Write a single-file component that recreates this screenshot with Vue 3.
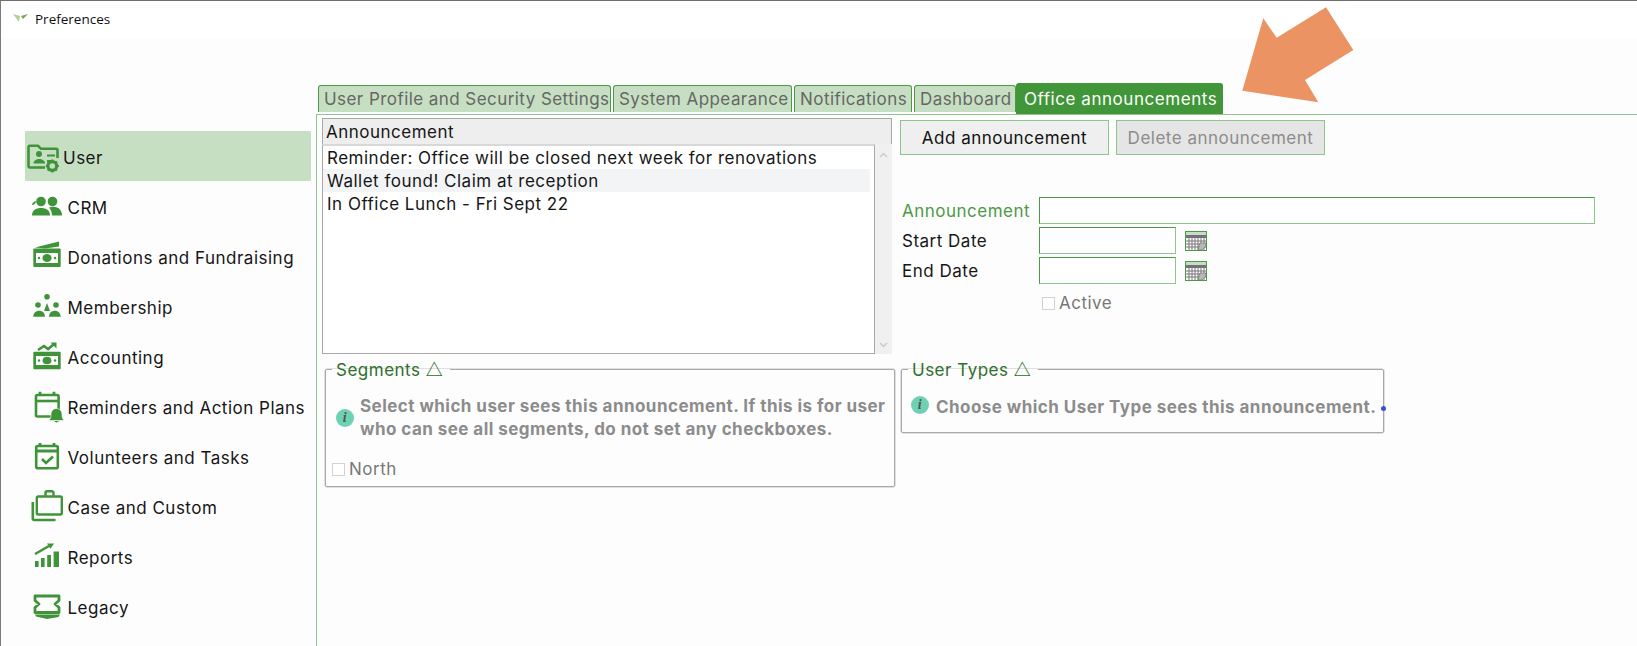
<script setup>
const tabs = [
  { label: 'User Profile and Security Settings', width: 293 },
  { label: 'System Appearance', width: 179 },
  { label: 'Notifications', width: 118 },
  { label: 'Dashboard', width: 102 },
  { label: 'Office announcements', width: 207, active: true },
]
const rows = [
  'Reminder: Office will be closed next week for renovations',
  'Wallet found! Claim at reception',
  'In Office Lunch - Fri Sept 22',
]
</script>

<template>
  <div class="window">
    <header class="titlebar">
      <svg class="logo" width="16" height="12" viewBox="0 0 16 12">
        <path d="M0 1 L7 3 L6 9 Z" fill="#b5cf8f" />
        <path d="M8 3 L15 1 L10 6 Z" fill="#6fa65c" />
      </svg>
      <span>Preferences</span>
    </header>

    <div class="body">
      <nav class="sidebar">
        <div class="nav-item selected user-item">
          <svg class="nav-icon user-icon" width="36" height="40" viewBox="0 0 36 40">
            <path d="M8 31.5 H3 a1.5 1.5 0 0 1-1.5-1.5 V11 a1.2 1.2 0 0 1 1.2-1.2 H11 l3 3 H29 a1.5 1.5 0 0 1 1.5 1.5 V22" fill="none" stroke="#3f9439" stroke-width="2.6" />
            <path d="M8 31.5 H18" stroke="#3f9439" stroke-width="2.6" />
            <circle cx="12" cy="18" r="3" fill="#3f9439" />
            <path d="M6.5 27.5 c0-6 11.5-6 11.5 0 Z" fill="#3f9439" />
            <path d="M20 19.5 H28 M20 25 H25" stroke="#3f9439" stroke-width="2.2" />
            <circle cx="25.3" cy="30" r="4.4" fill="#c6dfc2" stroke="#3f9439" stroke-width="3.2" />
            <path d="M25.3 23.5 V26 M25.3 34 V36.5 M18.8 30 H21.3 M29.3 30 H31.8 M20.7 25.4 L22.4 27.1 M28.2 32.9 L29.9 34.6 M20.7 34.6 L22.4 32.9 M28.2 27.1 L29.9 25.4" stroke="#3f9439" stroke-width="2" />
          </svg>
          <span>User</span>
        </div>

        <div class="nav-item">
          <svg class="nav-icon" width="38" height="40" viewBox="0 0 38 40">
            <circle cx="14" cy="15.5" r="4.8" fill="#3f9439" />
            <circle cx="25.5" cy="15.5" r="4.8" fill="#3f9439" />
            <path d="M5 19 c0-2 2-3.5 4-4 c0 2-1.5 4-4 4 Z" fill="#3f9439" />
            <path d="M5 29.5 c0-1 0-4 3-6 c3-2 9-2 12 0 c3 2 3 5 3 6 Z" fill="#3f9439" />
            <path d="M22 21.5 c4-1.5 9-.5 11 2 c1.6 2 2 4 2 6 H25 c0-3-1-6-3-8 Z" fill="#3f9439" />
          </svg>
          <span>CRM</span>
        </div>

        <div class="nav-item">
          <svg class="nav-icon" width="38" height="40" viewBox="0 0 38 40">
            <path d="M8 11.5 L32 5.5 V10.5 L18 12.5 Z" fill="#3f9439" />
            <rect x="6.3" y="12.5" width="27.4" height="18.4" rx="1" fill="#3f9439" />
            <rect x="9" y="17" width="22" height="10" fill="#fdfdfd" />
            <ellipse cx="20" cy="22" rx="4.6" ry="4" fill="#3f9439" />
            <circle cx="12" cy="22" r="1.2" fill="#3f9439" />
            <circle cx="28" cy="22" r="1.2" fill="#3f9439" />
          </svg>
          <span>Donations and Fundraising</span>
        </div>

        <div class="nav-item">
          <svg class="nav-icon" width="38" height="40" viewBox="0 0 38 40">
            <circle cx="20" cy="10.8" r="2.8" fill="#3f9439" />
            <circle cx="11" cy="19" r="2.8" fill="#3f9439" />
            <circle cx="29" cy="19" r="2.8" fill="#3f9439" />
            <path d="M6.3 30.7 c0-8 11.7-8 11.7 0 Z M22 30.7 c0-8 11.7-8 11.7 0 Z" fill="#3f9439" />
            <path d="M17 25 L20 17 L23 25 Z" fill="#3f9439" />
          </svg>
          <span>Membership</span>
        </div>

        <div class="nav-item">
          <svg class="nav-icon" width="38" height="40" viewBox="0 0 38 40">
            <path d="M11 14 L17 10 L21 13 L26.5 8.5" fill="none" stroke="#3f9439" stroke-width="2.6" />
            <path d="M23.5 6.5 H29.5 V12.5 Z" fill="#3f9439" />
            <rect x="6.3" y="15.7" width="27.4" height="17.6" rx="1" fill="#3f9439" />
            <rect x="9" y="20" width="22" height="9" fill="#fdfdfd" />
            <ellipse cx="20" cy="24.5" rx="4.4" ry="3.8" fill="#3f9439" />
            <circle cx="12" cy="24.5" r="1.2" fill="#3f9439" />
            <circle cx="28" cy="24.5" r="1.2" fill="#3f9439" />
          </svg>
          <span>Accounting</span>
        </div>

        <div class="nav-item">
          <svg class="nav-icon" width="38" height="40" viewBox="0 0 38 40">
            <rect x="9" y="9" width="22.6" height="21.5" rx="1.5" fill="none" stroke="#3f9439" stroke-width="2.6" />
            <path d="M9 15 H31.6" stroke="#3f9439" stroke-width="2.6" />
            <path d="M13 5.7 V10 M27 5.7 V10" stroke="#3f9439" stroke-width="2.8" />
            <path d="M21.5 34.5 c2-1.5 2.5-3 2.5-6 c0-3 2-6 5.5-6 c3.5 0 5.5 3 5.5 6 c0 3 .5 4.5 2.2 6 Z" fill="#3f9439" stroke="#fdfdfd" stroke-width=".6" />
            <path d="M26.5 35 H32.5 L29.5 36.5 Z" fill="#3f9439" />
          </svg>
          <span>Reminders and Action Plans</span>
        </div>

        <div class="nav-item">
          <svg class="nav-icon" width="38" height="40" viewBox="0 0 38 40">
            <rect x="9.2" y="10" width="21.6" height="22.2" rx="1.5" fill="none" stroke="#3f9439" stroke-width="2.6" />
            <path d="M9 15 H31" stroke="#3f9439" stroke-width="3" />
            <path d="M13 7 V11 M27 7 V11" stroke="#3f9439" stroke-width="2.8" />
            <path d="M15 23 L19 27 L26 20.5" fill="none" stroke="#3f9439" stroke-width="2.6" />
          </svg>
          <span>Volunteers and Tasks</span>
        </div>

        <div class="nav-item">
          <svg class="nav-icon" width="38" height="40" viewBox="0 0 38 40">
            <rect x="9.8" y="10.5" width="25" height="18" rx="1.5" fill="none" stroke="#3f9439" stroke-width="2.4" />
            <path d="M18.5 10.5 V6.8 a1.5 1.5 0 0 1 1.5-1.5 H25 a1.5 1.5 0 0 1 1.5 1.5 V10.5" fill="none" stroke="#3f9439" stroke-width="2.4" />
            <path d="M5.8 16 V32.5 a1.5 1.5 0 0 0 1.5 1.5 H28.5" fill="none" stroke="#3f9439" stroke-width="2.6" />
          </svg>
          <span>Case and Custom</span>
        </div>

        <div class="nav-item">
          <svg class="nav-icon" width="38" height="40" viewBox="0 0 38 40">
            <rect x="8" y="25" width="3.6" height="6" fill="#3f9439" />
            <rect x="14" y="22" width="3.6" height="9" fill="#3f9439" />
            <rect x="20.2" y="19" width="3.8" height="12" fill="#3f9439" />
            <rect x="26.6" y="15.5" width="5.4" height="15.5" fill="#3f9439" />
            <path d="M8 18 L22 10" fill="none" stroke="#3f9439" stroke-width="2.4" />
            <path d="M20 7.5 H27 L23.5 12.8 Z" fill="#3f9439" />
          </svg>
          <span>Reports</span>
        </div>

        <div class="nav-item">
          <svg class="nav-icon" width="38" height="40" viewBox="0 0 38 40">
            <path d="M8 10 H32 V14.5 L28 18 L32 21.5 V26.5 H8 V21.5 L12 18 L8 14.5 Z" fill="none" stroke="#3f9439" stroke-width="2.8" stroke-linejoin="round" />
            <path d="M8 28.5 H33 L31.5 31 L20 33 L9 30.5 Z" fill="#3f9439" />
          </svg>
          <span>Legacy</span>
        </div>
      </nav>

      <main class="main">
        <div class="tabs">
          <div v-for="tab in tabs" :key="tab.label" class="tab" :class="{ active: tab.active }" :style="{ width: tab.width + 'px' }">{{ tab.label }}</div>
        </div>

        <section class="panel">
          <div class="top-row">
            <div class="table">
              <div class="table-head">Announcement</div>
              <div class="table-body">
                <div class="list">
                  <div v-for="(row, i) in rows" :key="row" class="list-row" :class="{ hover: i === 1 }">{{ row }}</div>
                </div>
                <div class="scrollbar">
                  <svg width="9" height="6" viewBox="0 0 9 6"><path d="M1 5 L4.5 1.5 L8 5" fill="none" stroke="#c9c9c9" stroke-width="1.4" /></svg>
                  <svg width="9" height="6" viewBox="0 0 9 6"><path d="M1 1 L4.5 4.5 L8 1" fill="none" stroke="#c9c9c9" stroke-width="1.4" /></svg>
                </div>
              </div>
            </div>

            <div class="editor">
              <div class="buttons">
                <button class="btn">Add announcement</button>
                <button class="btn disabled">Delete announcement</button>
              </div>
              <div class="form">
                <label class="req">Announcement</label>
                <div class="field wide"></div>
                <label>Start Date</label>
                <div class="date-cell">
                  <div class="field short"></div>
                  <svg class="cal" width="22" height="20" viewBox="0 0 22 20">
                    <rect x=".5" y=".5" width="21" height="19" fill="#fff" stroke="#4c9a47" />
                    <rect x="1" y="1" width="20" height="3" fill="#c6dfc2" />
                    <rect x="1" y="4" width="20" height="3" fill="#77707a" />
                    <path d="M1 10 H21 M1 13 H21 M1 16 H21 M4 7 V19 M7 7 V19 M10 7 V19 M13 7 V19 M16 7 V19 M19 7 V19" stroke="#777" stroke-width="1" />
                    <path d="M13 19 L15 12 H21 V15 L17 19 Z" fill="#b8b8b8" stroke="#666" stroke-width=".6" />
                  </svg>
                </div>
                <label>End Date</label>
                <div class="date-cell">
                  <div class="field short"></div>
                  <svg class="cal" width="22" height="20" viewBox="0 0 22 20">
                    <rect x=".5" y=".5" width="21" height="19" fill="#fff" stroke="#4c9a47" />
                    <rect x="1" y="1" width="20" height="3" fill="#c6dfc2" />
                    <rect x="1" y="4" width="20" height="3" fill="#77707a" />
                    <path d="M1 10 H21 M1 13 H21 M1 16 H21 M4 7 V19 M7 7 V19 M10 7 V19 M13 7 V19 M16 7 V19 M19 7 V19" stroke="#777" stroke-width="1" />
                    <path d="M13 19 L15 12 H21 V15 L17 19 Z" fill="#b8b8b8" stroke="#666" stroke-width=".6" />
                  </svg>
                </div>
                <span></span>
                <div class="check active-check"><i class="box"></i><span>Active</span></div>
              </div>
            </div>
          </div>

          <div class="bottom-row">
            <fieldset class="group segments">
              <legend>Segments <span class="tri">△</span></legend>
              <div class="info">
                <span class="info-icon">i</span>
                <p>Select which user sees this announcement. If this is for user who can see all segments, do not set any checkboxes.</p>
              </div>
              <div class="check north"><i class="box"></i><span>North</span></div>
            </fieldset>

            <fieldset class="group types">
              <legend>User Types <span class="tri">△</span></legend>
              <div class="info single">
                <span class="info-icon">i</span>
                <p>Choose which User Type sees this announcement.</p>
              </div>
              <i class="dot"></i>
            </fieldset>
          </div>
        </section>
      </main>
    </div>

    <svg class="arrow" width="120" height="110" viewBox="0 0 120 110">
      <polygon points="2.3,90.7 23.3,18.3 36.7,37.7 86,7.3 113.3,50 65,80 78.3,102.3" fill="#eb9362" />
    </svg>
  </div>
</template>

<style>
html, body { margin: 0; background: #fdfdfd; }
</style>

<style scoped>
.window {
  position: relative;
  width: 1637px;
  height: 646px;
  box-sizing: border-box;
  border-top: 1px solid #6e6e6e;
  border-left: 1px solid #7a7a7a;
  background: #fdfdfd;
  overflow: hidden;
  font-family: Inter, "Liberation Sans", sans-serif;
  font-size: 17px;
  letter-spacing: .5px;
  color: #161616;
  display: flex;
  flex-direction: column;
}
.titlebar {
  height: 37px;
  flex: none;
  background: #fff;
  display: flex;
  align-items: center;
  padding: 0 0 2px 12px;
  box-sizing: border-box;
  gap: 6px;
  font-family: "Open Sans", sans-serif;
  font-size: 13.5px;
  letter-spacing: 0;
  color: #111;
}
.body { flex: 1; display: flex; min-height: 0; }
.sidebar {
  width: 315px;
  flex: none;
  box-sizing: border-box;
  padding: 93px 0 0 24px;
}
.nav-item {
  width: 286px;
  height: 50px;
  display: flex;
  align-items: center;
  padding-left: 2px;
  box-sizing: border-box;
}
.nav-item span { padding-top: 4px; }
.nav-item.selected { background: #c6dfc2; }
.nav-icon { flex: none; margin-right: 2.5px; }
.user-icon { margin-right: 0; }
.main { flex: 1; min-width: 0; display: flex; flex-direction: column; }
.tabs {
  margin-top: 45px;
  height: 31px;
  flex: none;
  display: flex;
  align-items: flex-start;
  padding-left: 2px;
  gap: 2px;
}
.tab {
  flex: none;
  height: 27px;
  margin-top: 2px;
  box-sizing: border-box;
  padding-left: 5px;
  display: flex;
  align-items: center;
  white-space: nowrap;
  overflow: hidden;
  letter-spacing: .44px;
  background: #c6dfc2;
  color: #666;
  border: 1px solid #4c9a47;
  border-bottom: 0;
  border-radius: 3px 3px 0 0;
}
.tab.active {
  height: 31px;
  margin-top: 0;
  margin-left: -2px;
  padding-left: 7px;
  letter-spacing: .55px;
  background: #409638;
  border-color: #409638;
  color: #fff;
}
.panel {
  flex: 1;
  border-top: 1px solid #8fc48c;
  border-left: 1px solid #8fc48c;
  padding-top: 3px;
  min-height: 0;
}
.top-row { display: flex; padding-left: 5px; height: 236px; }
.table { width: 570px; flex: none; display: flex; flex-direction: column; }
.table-head {
  height: 26px;
  box-sizing: border-box;
  border: 1px solid #a8a8a8;
  border-bottom: 0;
  background: #eeeeee;
  padding-left: 3px;
  display: flex;
  align-items: center;
  flex: none;
}
.table-body { flex: 1; display: flex; min-height: 0; }
.list {
  flex: 1;
  box-sizing: border-box;
  border: 1px solid #a8a8a8;
  border-top: 2px solid #d8d8d8;
  background: #fff;
  padding-right: 4px;
}
.list-row {
  height: 23px;
  line-height: 24px;
  padding-left: 4px;
  overflow: hidden;
}
.list-row.hover { background: #f3f4f6; }
.scrollbar {
  width: 17px;
  flex: none;
  background: #f0f0f0;
  display: flex;
  flex-direction: column;
  justify-content: space-between;
  align-items: center;
  padding: 8px 0 6px;
  box-sizing: border-box;
}
.editor { margin-left: 8px; flex: 1; min-width: 0; }
.buttons { display: flex; gap: 7px; margin-top: 2px; }
.btn {
  width: 209px;
  height: 35px;
  box-sizing: border-box;
  border: 1px solid #8fc48c;
  outline: 0;
  background: #efefef;
  font: inherit;
  letter-spacing: inherit;
  color: #111;
  padding: 0;
}
.btn.disabled { background: #e5e5e5; color: #8c8c8c; }
.form {
  margin: 42px 0 0 2px;
  display: grid;
  grid-template-columns: 137px auto;
  row-gap: 3px;
  align-items: center;
}
.form label { color: #161616; }
.form label.req { color: #4c9a47; }
.field {
  height: 27px;
  box-sizing: border-box;
  background: #fff;
  border: 1px solid #8fc48c;
  border-top-color: #4c9a47;
  border-left-color: #4c9a47;
}
.field.wide { width: 556px; }
.field.short { width: 137px; }
.date-cell { display: flex; align-items: center; gap: 9px; }
.check {
  display: flex;
  align-items: center;
  gap: 4px;
  color: #777;
}
.box {
  display: block;
  width: 13px;
  height: 13px;
  box-sizing: border-box;
  border: 1px solid #d2d2d2;
  background: #fff;
}
.active-check { margin: 6px 0 0 3px; }
.bottom-row {
  display: flex;
  align-items: flex-start;
  gap: 6px;
  padding-left: 8px;
  margin-top: 4px;
}
.group {
  margin: 0;
  box-sizing: border-box;
  border: 1px solid #a8a8a8;
  border-radius: 2px;
  box-shadow: 0 0 0 .5px #c4c4c4;
  padding: 0;
  min-width: 0;
  position: relative;
}
.group legend {
  margin-left: 6px;
  padding: 2px 7px 0 4px;
  color: #2f6f2b;
  line-height: 20px;
}
.tri { font-family: "Noto Sans CJK SC", "DejaVu Sans", sans-serif; font-size: 17px; font-weight: 700; line-height: 1; letter-spacing: 0; }
.segments { width: 570px; height: 129px; }
.types { width: 483px; height: 75px; }
.info { display: flex; align-items: center; }
.info p {
  margin: 0;
  font-weight: 700;
  font-size: 17px;
  letter-spacing: .45px;
  line-height: 23px;
  color: #8c8c8c;
}
.info-icon {
  flex: none;
  width: 18px;
  height: 18px;
  border-radius: 50%;
  background: #6ed2b2;
  color: #555;
  font: italic 700 14px/18px "Liberation Serif", serif;
  text-align: center;
}
.segments .info { padding: 15px 0 0 10px; gap: 6px; }
.types .info { padding: 16px 0 0 9px; gap: 7px; }
.types .info-icon { margin-top: -6px; }
.north { margin: 18px 0 0 6px; }
.dot {
  position: absolute;
  right: -3px;
  top: 26px;
  width: 5px;
  height: 5px;
  border-radius: 50%;
  background: #3d4fd1;
}
.arrow { position: absolute; left: 1239px; top: -1px; }
</style>
